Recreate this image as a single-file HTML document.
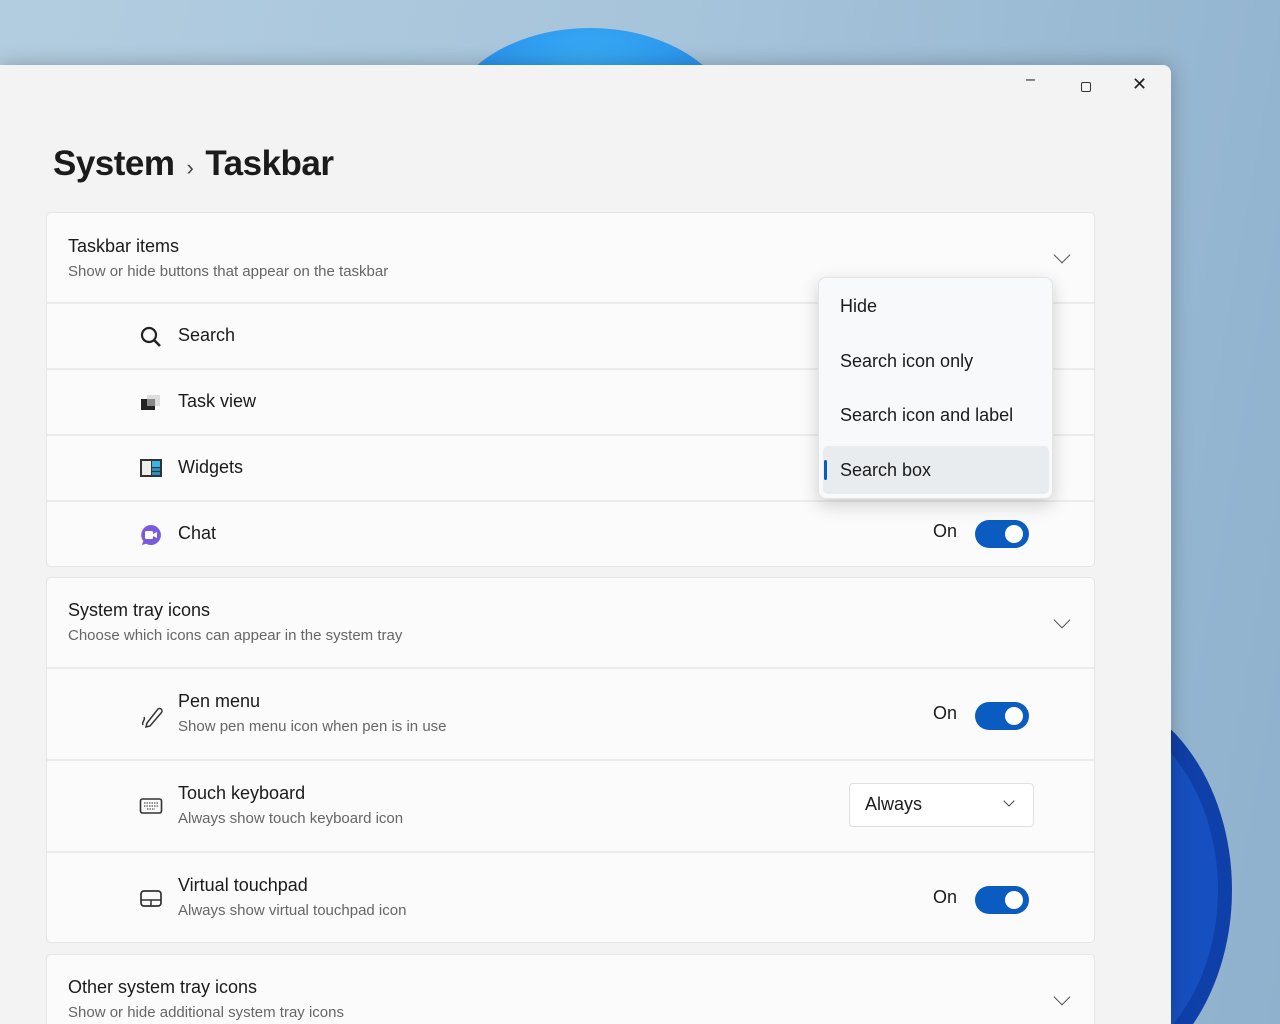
<!DOCTYPE html>
<html style="overflow:hidden"><head><style>
*{margin:0;padding:0;box-sizing:border-box}
html,body{width:1280px;height:1024px;overflow:hidden}
body{position:relative;font-family:"Segoe UI","Liberation Sans",sans-serif;background:linear-gradient(100deg,#b3cde0 0%,#a5c3da 50%,#8fb1cd 100%);color:#1b1b1b}
.bloom{position:absolute;left:445px;top:28px;width:290px;height:200px;border-radius:50%;background:radial-gradient(ellipse at 50% 30%,#3ab0f5,#1f7de8);}
.clip{position:absolute;left:0;top:0;width:1280px;height:1024px;overflow:hidden}
.circ{position:absolute;left:930px;top:690px;width:302px;height:400px;border-radius:50%;background:#0f3fa8;}
.circ2{position:absolute;left:930px;top:705px;width:288px;height:370px;border-radius:50%;background:#1650c0;}
.win{position:absolute;left:0;top:65px;width:1171px;height:959px;background:#f3f3f3;border-top-right-radius:8px;box-shadow:0 0 20px rgba(0,0,0,.25)}
.ctl{position:absolute;top:8px;font-size:16px;color:#222}
h1{position:absolute;left:53px;top:142px;font-size:35px;font-weight:600;letter-spacing:-.5px;line-height:44px}
h1 span{font-size:22px;font-weight:400;margin:0 12px 0 12px;color:#444}
.card{position:absolute;left:46px;width:1049px;background:#fbfbfb;border:1px solid #e6e6e6;border-radius:5px}
.row{position:absolute;left:0;right:0;border-top:2px solid #ececec}
.t{position:absolute;font-size:18px;color:#1b1b1b}
.s{position:absolute;font-size:15px;color:#666}
.chev{position:absolute;right:26px;width:12px;height:12px;border-right:1.5px solid #555;border-bottom:1.5px solid #555;transform:rotate(45deg)}
.tog{position:absolute;left:886px;width:100px;height:28px}
.tog b{position:absolute;left:0;top:1px;font-weight:400;font-size:18px}
.tog i{position:absolute;left:42px;top:0;width:54px;height:28px;border-radius:14px;background:#0b5cc1}
.tog i:after{content:"";position:absolute;right:6px;top:5px;width:18px;height:18px;border-radius:50%;background:#fff}
.ic{position:absolute;left:92px}
.menu{position:absolute;left:818px;top:277px;width:235px;height:222px;background:#f7f9fb;border-radius:8px;box-shadow:0 6px 18px rgba(0,0,0,.18);border:1px solid #e2e4e6}
.menu div{position:absolute;left:21px;font-size:18px}
</style></head><body>
<div class="clip">
<div class="bloom"></div>
<div class="circ"></div><div class="circ2"></div>
</div>
<div class="win">
<div class="ctl" style="left:1026px;top:6px">–</div>
<div style="position:absolute;left:1081px;top:17px;width:10px;height:10px;border:1.5px solid #333;border-radius:2px"></div>
<div class="ctl" style="left:1132px;top:9px;font-size:18px">✕</div>
</div>
<h1>System<span>›</span>Taskbar</h1>

<div class="card" style="top:212px;height:355px">
 <div class="t" style="left:21px;top:23px">Taskbar items</div>
 <div class="s" style="left:21px;top:50px">Show or hide buttons that appear on the taskbar</div>
 <div class="chev" style="top:36px"></div>
 <div class="row" style="top:89px;height:66px">
  <svg class="ic" style="top:21px" width="24" height="24" viewBox="0 0 24 24"><circle cx="10" cy="10" r="7" fill="none" stroke="#222" stroke-width="2.2"/><path d="M15 15l6 6" stroke="#222" stroke-width="2.6"/></svg>
  <div class="t" style="left:131px;top:21px">Search</div></div>
 <div class="row" style="top:155px;height:66px">
  <svg class="ic" style="top:22px" width="24" height="22" viewBox="0 0 24 22"><rect x="8" y="3" width="13" height="11" fill="#ddd"/><rect x="2" y="7" width="14" height="11" fill="#222"/><rect x="8" y="7" width="8" height="7" fill="#888"/></svg>
  <div class="t" style="left:131px;top:21px">Task view</div></div>
 <div class="row" style="top:221px;height:66px">
  <svg class="ic" style="top:21px" width="24" height="22" viewBox="0 0 24 22"><rect x="1" y="2" width="22" height="18" fill="#333"/><rect x="3" y="4" width="9" height="14" fill="#eee"/><rect x="13" y="4" width="8" height="6" fill="#3ab5e6"/><rect x="13" y="11" width="8" height="3" fill="#2a8fc0"/><rect x="13" y="15" width="8" height="3" fill="#2a8fc0"/></svg>
  <div class="t" style="left:131px;top:21px">Widgets</div></div>
 <div class="row" style="top:287px;height:66px">
  <svg class="ic" style="top:21px" width="24" height="24" viewBox="0 0 24 24"><path d="M12 2a10 10 0 1 1-5 18.7L3 22l1.3-4A10 10 0 0 1 12 2z" fill="#7a5be0"/><rect x="6" y="8" width="8" height="8" rx="1.5" fill="#fff"/><path d="M14 11l4-2v6l-4-2z" fill="#fff"/></svg>
  <div class="t" style="left:131px;top:21px">Chat</div>
  <div class="tog" style="top:18px"><b>On</b><i></i></div></div>
</div>

<div class="card" style="top:577px;height:366px">
 <div class="t" style="left:21px;top:22px">System tray icons</div>
 <div class="s" style="left:21px;top:49px">Choose which icons can appear in the system tray</div>
 <div class="chev" style="top:36px"></div>
 <div class="row" style="top:89px;height:92px">
  <svg class="ic" style="top:34px" width="26" height="26" viewBox="0 0 26 26"><path d="M8 20L19 6a2.5 2.5 0 0 1 3.5 3.5L11 23l-4 1z M4 22c-2-3 3-5 1-8" fill="none" stroke="#333" stroke-width="1.5"/></svg>
  <div class="t" style="left:131px;top:22px">Pen menu</div>
  <div class="s" style="left:131px;top:49px">Show pen menu icon when pen is in use</div>
  <div class="tog" style="top:33px"><b>On</b><i></i></div></div>
 <div class="row" style="top:181px;height:92px">
  <svg class="ic" style="top:36px" width="24" height="18" viewBox="0 0 24 18"><rect x="1.5" y="2" width="21" height="14" rx="2" fill="none" stroke="#333" stroke-width="1.6"/><path d="M5 6h14M5 9h14M8 12h8" stroke="#555" stroke-width="1.3" stroke-dasharray="1.5 1"/></svg>
  <div class="t" style="left:131px;top:22px">Touch keyboard</div>
  <div class="s" style="left:131px;top:49px">Always show touch keyboard icon</div>
  <div style="position:absolute;left:802px;top:22px;width:185px;height:44px;background:#fff;border:1px solid #e0e0e0;border-radius:4px">
   <div class="t" style="left:15px;top:10px">Always</div>
   <div style="position:absolute;right:20px;top:13px;width:8px;height:8px;border-right:1.5px solid #444;border-bottom:1.5px solid #444;transform:rotate(45deg)"></div></div></div>
 <div class="row" style="top:273px;height:92px">
  <svg class="ic" style="top:36px" width="24" height="20" viewBox="0 0 24 20"><rect x="2" y="2" width="20" height="15" rx="3" fill="none" stroke="#333" stroke-width="1.7"/><path d="M2 11h20M12 11v6" stroke="#333" stroke-width="1.5"/></svg>
  <div class="t" style="left:131px;top:22px">Virtual touchpad</div>
  <div class="s" style="left:131px;top:49px">Always show virtual touchpad icon</div>
  <div class="tog" style="top:33px"><b>On</b><i></i></div></div>
</div>

<div class="card" style="top:954px;height:70px;border-bottom:none;border-radius:5px 5px 0 0">
 <div class="t" style="left:21px;top:22px">Other system tray icons</div>
 <div class="s" style="left:21px;top:49px">Show or hide additional system tray icons</div>
 <div class="chev" style="top:36px"></div>
</div>

<div class="menu">
 <div style="top:18px">Hide</div>
 <div style="top:73px">Search icon only</div>
 <div style="top:127px">Search icon and label</div>
 <div style="left:4px;top:168px;width:226px;height:48px;background:#e9ecef;border-radius:5px"></div>
 <div style="left:5px;top:182px;width:3px;height:20px;background:#0b5cc1;border-radius:2px"></div>
 <div style="top:182px">Search box</div>
</div>
</body></html>
